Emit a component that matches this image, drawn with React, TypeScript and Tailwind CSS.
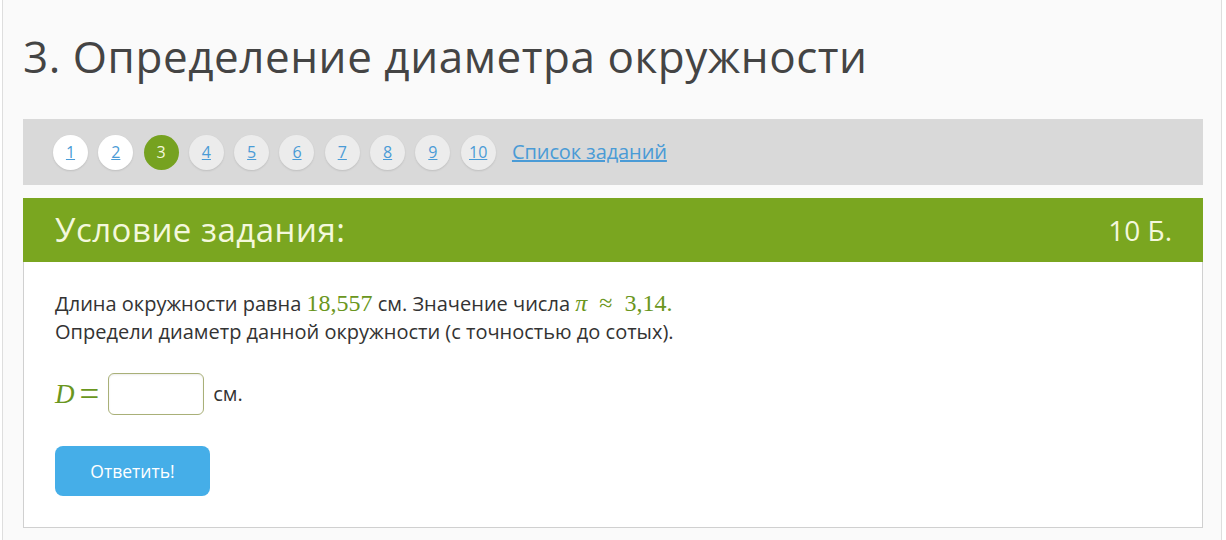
import { useState } from 'react'

const pages = [1, 2, 3, 4, 5, 6, 7, 8, 9, 10]
const current = 3
const done = [1, 2]

function PageDot({ n }: { n: number }) {
  if (n === current) {
    return (
      <span className="flex h-[35px] w-[35px] items-center justify-center rounded-full bg-[#76a220] text-[16px] text-[#f4f8dc]">
        {n}
      </span>
    )
  }
  const bg = done.includes(n) ? 'bg-white' : 'bg-[#ececec]'
  return (
    <a
      href="#"
      className={`flex h-[35px] w-[35px] items-center justify-center rounded-full ${bg} text-[16px] text-[#4a9bd6] underline shadow-[0_1px_2px_rgba(0,0,0,0.12)]`}
    >
      {n}
    </a>
  )
}

export default function App() {
  const [value, setValue] = useState('')

  return (
    <div className="min-h-[540px] bg-white font-['Open_Sans',sans-serif]">
      <div className="ml-[2px] mr-[4px] min-h-[540px] border-x border-[#dedede] bg-[#fafafa] pl-[20px] pr-[18px]">
        <h1 className="pt-[26px] text-[44px] leading-[60px] tracking-[0.55px] text-[#444]">
          3. Определение диаметра окружности
        </h1>

        <nav className="mt-[33px] flex h-[66px] items-center gap-[10.3px] bg-[#d9d9d9] pl-[30px]">
          {pages.map((n) => (
            <PageDot key={n} n={n} />
          ))}
          <a href="#" className="ml-[6px] text-[20px] tracking-[-0.1px] text-[#4a9bd6] underline">
            Список заданий
          </a>
        </nav>

        <section className="mt-[13px]">
          <div className="flex h-[64px] items-center justify-between bg-[#7aa620] pl-[32px] pr-[31px]">
            <span className="text-[33px] tracking-[0.5px] text-[#f4f8dc]">Условие задания:</span>
            <span className="text-[28px] text-[#f4f8dc]">10 Б.</span>
          </div>

          <div className="border-x border-b border-[#d0d0d0] bg-white pb-[31px] pl-[31px] pt-[26px] text-[#333]">
            <p className="text-[20px] leading-[30px]">
              Длина окружности равна{' '}
              <span className="font-['Liberation_Serif',serif] text-[24px] text-[#6a9620]">18,557</span> см. Значение
              числа{' '}
              <span className="font-['Liberation_Serif',serif] text-[24px] text-[#6a9620]">
                <i>π</i>&nbsp;&nbsp;≈&nbsp;&nbsp;3,14.
              </span>
            </p>
            <p className="text-[20px] leading-[26px]">
              Определи диаметр данной окружности (с точностью до сотых).
            </p>

            <div className="mt-[28px] flex items-center">
              <span className="flex items-center font-['Liberation_Serif',serif] text-[27px] leading-none text-[#6a9620]">
                <i>D</i>
                <span className="ml-[5px] text-[35px] leading-none">=</span>
              </span>
              <input
                value={value}
                onChange={(e) => setValue(e.target.value)}
                className="ml-[9px] h-[42px] w-[96px] rounded-[6px] border border-[#a9b078] bg-white px-2 outline-none shadow-[inset_0_1px_2px_rgba(0,0,0,0.08)]"
              />
              <span className="ml-[9px] text-[20px]">см.</span>
            </div>

            <button
              type="button"
              className="mt-[31px] h-[50px] w-[155px] rounded-[8px] bg-[#45aee8] text-[17.5px] text-white"
            >
              Ответить!
            </button>
          </div>
        </section>
      </div>
    </div>
  )
}
